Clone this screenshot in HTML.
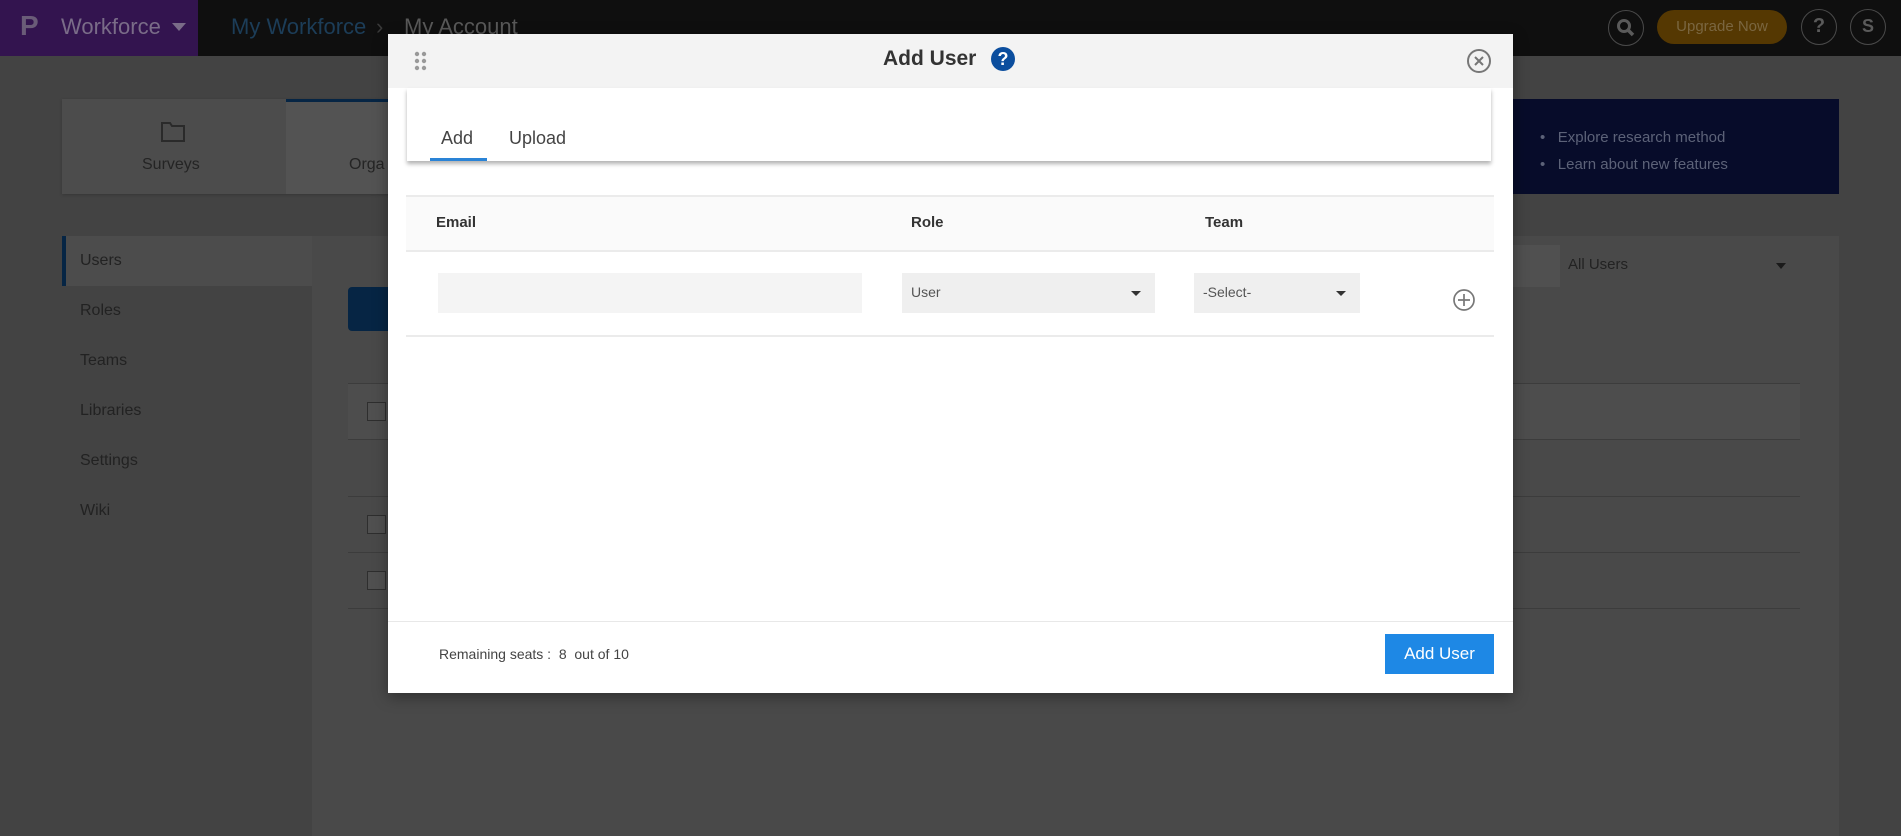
<!DOCTYPE html>
<html><head><meta charset="utf-8"><style>
*{box-sizing:border-box;margin:0;padding:0}
body{width:1901px;height:831px;overflow:hidden;background:#434343;font-family:"Liberation Sans",sans-serif;position:relative}
.a{position:absolute}
.t{white-space:nowrap}
</style></head><body>
<!-- top bar -->
<div class="a" style="left:0;top:0;width:1901px;height:56px;background:#0f0f0f"></div>
<div class="a" style="left:0;top:0;width:198px;height:56px;background:#33144f"></div>
<div class="a t" style="left:20px;top:10px;color:#6a5c78;font-size:28px;font-weight:bold">P</div>
<div class="a t" style="left:61px;top:14px;color:#7a6c88;font-size:22px">Workforce</div>
<div class="a" style="left:172px;top:23px;border-left:7px solid transparent;border-right:7px solid transparent;border-top:8px solid #7a6c88"></div>
<div class="a t" style="left:231px;top:14px;color:#1c3d58;font-size:22px">My Workforce</div>
<div class="a t" style="left:376px;top:14px;color:#3a3a3a;font-size:22px">›</div>
<div class="a t" style="left:404px;top:14px;color:#585858;font-size:22px">My Account</div>
<div class="a" style="left:1608px;top:10px;width:36px;height:36px;border:1.5px solid #4a4a4a;border-radius:50%"></div>
<svg class="a" style="left:1615px;top:17px" width="22" height="22" viewBox="0 0 22 22"><circle cx="9" cy="9" r="5.5" fill="none" stroke="#5a5a5a" stroke-width="3"/><path d="M13 13l5 5" stroke="#5a5a5a" stroke-width="3.5"/></svg>
<div class="a t" style="left:1657px;top:10px;width:130px;height:34px;border-radius:17px;background:#553802;color:#7a6640;font-size:15px;line-height:34px;text-align:center">Upgrade Now</div>
<div class="a t" style="left:1801px;top:9px;width:36px;height:36px;border:1.5px solid #4a4a4a;border-radius:50%;color:#5a5a5a;font-size:20px;font-weight:bold;text-align:center;line-height:33px">?</div>
<div class="a t" style="left:1850px;top:9px;width:36px;height:36px;border:1.5px solid #4a4a4a;border-radius:50%;color:#5a5a5a;font-size:18px;font-weight:bold;text-align:center;line-height:33px">S</div>
<!-- cards -->
<div class="a" style="left:62px;top:99px;width:1450px;height:95px;background:#4c4c4c;box-shadow:0 1px 3px rgba(0,0,0,.2)"></div>
<div class="a" style="left:286px;top:99px;width:200px;height:95px;background:#535353;border-top:3px solid #062544"></div>
<svg class="a" style="left:160px;top:121px" width="26" height="22" viewBox="0 0 26 22"><path d="M2 2h8l2 3h12v15H2z" fill="none" stroke="#2a2a2a" stroke-width="2"/></svg>
<div class="a t" style="left:142px;top:156px;color:#242424;font-size:16px">Surveys</div>
<div class="a t" style="left:349px;top:156px;color:#242424;font-size:16px">Orga</div>
<div class="a" style="left:1500px;top:99px;width:339px;height:95px;background:#070c2a"></div>
<div class="a t" style="left:1540px;top:124px;color:#5c6278;font-size:15px;line-height:27px">•&nbsp;&nbsp;&nbsp;Explore research method<br>•&nbsp;&nbsp;&nbsp;Learn about new features</div>
<!-- left nav -->
<div class="a" style="left:62px;top:236px;width:250px;height:600px;background:#434343"></div>
<div class="a" style="left:62px;top:236px;width:250px;height:50px;background:#4c4c4c;border-left:4px solid #062544"></div>
<div class="a t" style="left:80px;top:236px;color:#222;font-size:16px;line-height:50px">Users</div>
<div class="a t" style="left:80px;top:286px;color:#222;font-size:16px;line-height:50px">Roles<br>Teams<br>Libraries<br>Settings<br>Wiki</div>
<div class="a" style="left:312px;top:236px;width:1527px;height:600px;background:#494949"></div>
<div class="a" style="left:348px;top:287px;width:40px;height:44px;background:#062544;border-radius:4px 0 0 4px"></div>
<div class="a" style="left:1500px;top:245px;width:60px;height:42px;background:#505050"></div>
<div class="a t" style="left:1568px;top:256px;color:#222;font-size:15px">All Users</div>
<div class="a" style="left:1776px;top:263px;border-left:5px solid transparent;border-right:5px solid transparent;border-top:6px solid #1a1a1a"></div>
<div class="a" style="left:348px;top:383px;width:1452px;height:57px;background:#4d4d4d;border-top:1px solid #3c3c3c;border-bottom:1px solid #3c3c3c"></div>
<div class="a" style="left:348px;top:496px;width:1452px;height:57px;border-top:1px solid #3c3c3c;border-bottom:1px solid #3c3c3c"></div>
<div class="a" style="left:348px;top:608px;width:1452px;border-top:1px solid #3c3c3c"></div>
<div class="a" style="left:367px;top:402px;width:19px;height:19px;border:1px solid #2e2e2e;background:#505050"></div>
<div class="a" style="left:367px;top:515px;width:19px;height:19px;border:1px solid #2e2e2e;background:#505050"></div>
<div class="a" style="left:367px;top:571px;width:19px;height:19px;border:1px solid #2e2e2e;background:#505050"></div>
<!-- modal -->
<div class="a" style="left:388px;top:34px;width:1125px;height:659px;background:#fff;box-shadow:0 4px 14px rgba(0,0,0,.35)"></div>
<div class="a" style="left:388px;top:34px;width:1125px;height:54px;background:#f3f3f3"></div>
<svg class="a" style="left:414px;top:51px" width="14" height="20"><g fill="#999"><circle cx="3" cy="3" r="2.2"/><circle cx="10" cy="3" r="2.2"/><circle cx="3" cy="10" r="2.2"/><circle cx="10" cy="10" r="2.2"/><circle cx="3" cy="17" r="2.2"/><circle cx="10" cy="17" r="2.2"/></g></svg>
<div class="a t" style="left:883px;top:47px;color:#333;font-size:21px;font-weight:bold">Add User</div>
<div class="a t" style="left:991px;top:47px;width:24px;height:24px;border-radius:50%;background:#0b4e9e;color:#fff;font-size:18px;font-weight:bold;text-align:center;line-height:24px">?</div>
<svg class="a" style="left:1466px;top:48px" width="26" height="26"><circle cx="13" cy="13" r="11" fill="none" stroke="#777" stroke-width="2"/><path d="M9 9l8 8M17 9l-8 8" stroke="#777" stroke-width="2"/></svg>
<div class="a" style="left:407px;top:88px;width:1084px;height:73px;background:#fff;box-shadow:0 3px 4px rgba(0,0,0,.3)"></div>
<div class="a t" style="left:441px;top:128px;color:#444;font-size:18px">Add</div>
<div class="a t" style="left:509px;top:128px;color:#444;font-size:18px">Upload</div>
<div class="a" style="left:430px;top:158px;width:57px;height:3px;background:#2a83d6"></div>
<div class="a" style="left:406px;top:195px;width:1088px;height:57px;background:#fafafa;border-top:2px solid #ebebeb;border-bottom:2px solid #ebebeb"></div>
<div class="a t" style="left:436px;top:214px;color:#333;font-size:15px;font-weight:bold">Email</div>
<div class="a t" style="left:911px;top:214px;color:#333;font-size:15px;font-weight:bold">Role</div>
<div class="a t" style="left:1205px;top:214px;color:#333;font-size:15px;font-weight:bold">Team</div>
<div class="a" style="left:438px;top:273px;width:424px;height:40px;background:#f4f4f4"></div>
<div class="a" style="left:902px;top:273px;width:253px;height:40px;background:#efefef"></div>
<div class="a t" style="left:911px;top:284px;color:#555;font-size:14px">User</div>
<div class="a" style="left:1131px;top:291px;border-left:5px solid transparent;border-right:5px solid transparent;border-top:5px solid #333"></div>
<div class="a" style="left:1194px;top:273px;width:166px;height:40px;background:#efefef"></div>
<div class="a t" style="left:1203px;top:284px;color:#555;font-size:14px">-Select-</div>
<div class="a" style="left:1336px;top:291px;border-left:5px solid transparent;border-right:5px solid transparent;border-top:5px solid #333"></div>
<svg class="a" style="left:1452px;top:288px" width="24" height="24"><circle cx="12" cy="12" r="10" fill="none" stroke="#777" stroke-width="1.7"/><path d="M12 6v12M6 12h12" stroke="#777" stroke-width="1.7"/></svg>
<div class="a" style="left:406px;top:335px;width:1088px;border-top:2px solid #ebebeb"></div>
<div class="a" style="left:388px;top:621px;width:1125px;border-top:1px solid #e8e8e8"></div>
<div class="a t" style="left:439px;top:646px;color:#444;font-size:14px">Remaining seats :&nbsp; 8 &nbsp;out of 10</div>
<div class="a t" style="left:1385px;top:634px;width:109px;height:40px;background:#1e88e5;color:#fff;font-size:17px;text-align:center;line-height:40px">Add User</div>
</body></html>
